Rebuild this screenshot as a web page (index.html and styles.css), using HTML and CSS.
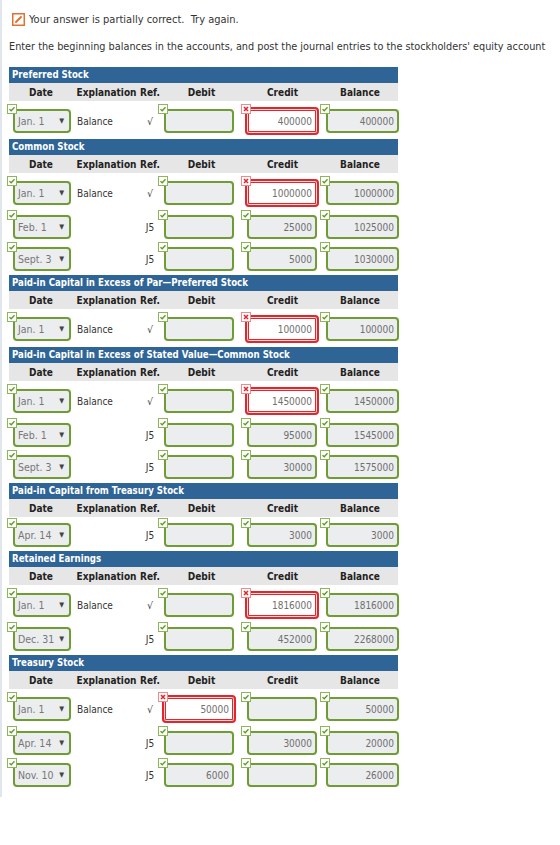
FILE: index.html
```html
<!DOCTYPE html>
<html lang="en">
<head>
    <meta charset="UTF-8">
    <meta name="viewport" content="width=device-width, initial-scale=1.0">
    <title>Stockholders' Equity Accounts</title>
    <link rel="stylesheet" href="styles.css">
</head>
<body>
    <div class="page">
        <p class="status">
            <svg class="status-icon" width="13" height="13" viewBox="0 0 13 13">
                <rect x="0.75" y="0.75" width="11.5" height="11.5" fill="#fff" stroke="#e4702f" stroke-width="1.5"/>
                <path d="M4 9 L9 4" stroke="#e4702f" stroke-width="2" stroke-linecap="round"/>
            </svg>
            Your answer is partially correct.&nbsp; Try again.
        </p>
        <p class="prompt">Enter the beginning balances in the accounts, and post the journal entries to the stockholders' equity account</p>

        <div class="ledger">
            <!-- Preferred Stock -->
            <section class="account">
                <h2 class="account-title">Preferred Stock</h2>
                <div class="row head"><span>Date</span><span>Explanation</span><span>Ref.</span><span>Debit</span><span>Credit</span><span>Balance</span></div>
                <div class="row">
                    <div class="cell"><span class="field date ok">Jan. 1<i class="arrow">&#9660;</i></span></div>
                    <div class="cell expl">Balance</div>
                    <div class="cell ref">&#8730;</div>
                    <div class="cell"><span class="field debit ok"></span></div>
                    <div class="cell"><span class="field credit bad">400000</span></div>
                    <div class="cell"><span class="field balance ok">400000</span></div>
                </div>
            </section>

            <!-- Common Stock -->
            <section class="account">
                <h2 class="account-title">Common Stock</h2>
                <div class="row head"><span>Date</span><span>Explanation</span><span>Ref.</span><span>Debit</span><span>Credit</span><span>Balance</span></div>
                <div class="row">
                    <div class="cell"><span class="field date ok">Jan. 1<i class="arrow">&#9660;</i></span></div>
                    <div class="cell expl">Balance</div>
                    <div class="cell ref">&#8730;</div>
                    <div class="cell"><span class="field debit ok"></span></div>
                    <div class="cell"><span class="field credit bad">1000000</span></div>
                    <div class="cell"><span class="field balance ok">1000000</span></div>
                </div>
                <div class="row">
                    <div class="cell"><span class="field date ok">Feb. 1<i class="arrow">&#9660;</i></span></div>
                    <div class="cell expl"></div>
                    <div class="cell ref">J5</div>
                    <div class="cell"><span class="field debit ok"></span></div>
                    <div class="cell"><span class="field credit ok">25000</span></div>
                    <div class="cell"><span class="field balance ok">1025000</span></div>
                </div>
                <div class="row">
                    <div class="cell"><span class="field date ok">Sept. 3<i class="arrow">&#9660;</i></span></div>
                    <div class="cell expl"></div>
                    <div class="cell ref">J5</div>
                    <div class="cell"><span class="field debit ok"></span></div>
                    <div class="cell"><span class="field credit ok">5000</span></div>
                    <div class="cell"><span class="field balance ok">1030000</span></div>
                </div>
            </section>

            <!-- Paid-in Capital in Excess of Par - Preferred -->
            <section class="account">
                <h2 class="account-title">Paid-in Capital in Excess of Par&mdash;Preferred Stock</h2>
                <div class="row head"><span>Date</span><span>Explanation</span><span>Ref.</span><span>Debit</span><span>Credit</span><span>Balance</span></div>
                <div class="row">
                    <div class="cell"><span class="field date ok">Jan. 1<i class="arrow">&#9660;</i></span></div>
                    <div class="cell expl">Balance</div>
                    <div class="cell ref">&#8730;</div>
                    <div class="cell"><span class="field debit ok"></span></div>
                    <div class="cell"><span class="field credit bad">100000</span></div>
                    <div class="cell"><span class="field balance ok">100000</span></div>
                </div>
            </section>

            <!-- Paid-in Capital in Excess of Stated Value - Common -->
            <section class="account">
                <h2 class="account-title">Paid-in Capital in Excess of Stated Value&mdash;Common Stock</h2>
                <div class="row head"><span>Date</span><span>Explanation</span><span>Ref.</span><span>Debit</span><span>Credit</span><span>Balance</span></div>
                <div class="row">
                    <div class="cell"><span class="field date ok">Jan. 1<i class="arrow">&#9660;</i></span></div>
                    <div class="cell expl">Balance</div>
                    <div class="cell ref">&#8730;</div>
                    <div class="cell"><span class="field debit ok"></span></div>
                    <div class="cell"><span class="field credit bad">1450000</span></div>
                    <div class="cell"><span class="field balance ok">1450000</span></div>
                </div>
                <div class="row">
                    <div class="cell"><span class="field date ok">Feb. 1<i class="arrow">&#9660;</i></span></div>
                    <div class="cell expl"></div>
                    <div class="cell ref">J5</div>
                    <div class="cell"><span class="field debit ok"></span></div>
                    <div class="cell"><span class="field credit ok">95000</span></div>
                    <div class="cell"><span class="field balance ok">1545000</span></div>
                </div>
                <div class="row">
                    <div class="cell"><span class="field date ok">Sept. 3<i class="arrow">&#9660;</i></span></div>
                    <div class="cell expl"></div>
                    <div class="cell ref">J5</div>
                    <div class="cell"><span class="field debit ok"></span></div>
                    <div class="cell"><span class="field credit ok">30000</span></div>
                    <div class="cell"><span class="field balance ok">1575000</span></div>
                </div>
            </section>

            <!-- Paid-in Capital from Treasury Stock -->
            <section class="account">
                <h2 class="account-title">Paid-in Capital from Treasury Stock</h2>
                <div class="row head"><span>Date</span><span>Explanation</span><span>Ref.</span><span>Debit</span><span>Credit</span><span>Balance</span></div>
                <div class="row">
                    <div class="cell"><span class="field date ok">Apr. 14<i class="arrow">&#9660;</i></span></div>
                    <div class="cell expl"></div>
                    <div class="cell ref">J5</div>
                    <div class="cell"><span class="field debit ok"></span></div>
                    <div class="cell"><span class="field credit ok">3000</span></div>
                    <div class="cell"><span class="field balance ok">3000</span></div>
                </div>
            </section>

            <!-- Retained Earnings -->
            <section class="account">
                <h2 class="account-title">Retained Earnings</h2>
                <div class="row head"><span>Date</span><span>Explanation</span><span>Ref.</span><span>Debit</span><span>Credit</span><span>Balance</span></div>
                <div class="row">
                    <div class="cell"><span class="field date ok">Jan. 1<i class="arrow">&#9660;</i></span></div>
                    <div class="cell expl">Balance</div>
                    <div class="cell ref">&#8730;</div>
                    <div class="cell"><span class="field debit ok"></span></div>
                    <div class="cell"><span class="field credit bad">1816000</span></div>
                    <div class="cell"><span class="field balance ok">1816000</span></div>
                </div>
                <div class="row">
                    <div class="cell"><span class="field date ok">Dec. 31<i class="arrow">&#9660;</i></span></div>
                    <div class="cell expl"></div>
                    <div class="cell ref">J5</div>
                    <div class="cell"><span class="field debit ok"></span></div>
                    <div class="cell"><span class="field credit ok">452000</span></div>
                    <div class="cell"><span class="field balance ok">2268000</span></div>
                </div>
            </section>

            <!-- Treasury Stock -->
            <section class="account">
                <h2 class="account-title">Treasury Stock</h2>
                <div class="row head"><span>Date</span><span>Explanation</span><span>Ref.</span><span>Debit</span><span>Credit</span><span>Balance</span></div>
                <div class="row">
                    <div class="cell"><span class="field date ok">Jan. 1<i class="arrow">&#9660;</i></span></div>
                    <div class="cell expl">Balance</div>
                    <div class="cell ref">&#8730;</div>
                    <div class="cell"><span class="field debit bad">50000</span></div>
                    <div class="cell"><span class="field credit ok"></span></div>
                    <div class="cell"><span class="field balance ok">50000</span></div>
                </div>
                <div class="row">
                    <div class="cell"><span class="field date ok">Apr. 14<i class="arrow">&#9660;</i></span></div>
                    <div class="cell expl"></div>
                    <div class="cell ref">J5</div>
                    <div class="cell"><span class="field debit ok"></span></div>
                    <div class="cell"><span class="field credit ok">30000</span></div>
                    <div class="cell"><span class="field balance ok">20000</span></div>
                </div>
                <div class="row">
                    <div class="cell"><span class="field date ok">Nov. 10<i class="arrow">&#9660;</i></span></div>
                    <div class="cell expl"></div>
                    <div class="cell ref">J5</div>
                    <div class="cell"><span class="field debit ok">6000</span></div>
                    <div class="cell"><span class="field credit ok"></span></div>
                    <div class="cell"><span class="field balance ok">26000</span></div>
                </div>
            </section>
        </div>
    </div>
</body>
</html>
```

FILE: styles.css
```css
body {
    margin: 0;
    padding: 0;
    font-family: "DejaVu Sans", Verdana, sans-serif;
    font-stretch: condensed;
    color: #333;
    background: #fff;
}

.page {
    border-left: 2px solid #e1e6ec;
    padding: 12px 0 6px 7px;
}

.status {
    margin: 0 0 0 3px;
    display: flex;
    align-items: center;
    gap: 4px;
    font-size: 11px;
    height: 14px;
}

.status-icon {
    display: block;
    flex: none;
}

.prompt {
    margin: 14px 0 14px 0;
    font-size: 10.8px;
    white-space: nowrap;
}

.ledger {
    width: 389px;
}

.account {
    margin-bottom: 2px;
}

.account-title {
    margin: 0;
    height: 16px;
    line-height: 16px;
    padding-left: 3px;
    background-color: #2f6497;
    color: #fff;
    font-size: 9.6px;
    font-weight: bold;
}

/* grid de columnas del libro mayor */
.row {
    display: grid;
    grid-template-columns: 64px 67px 20px 83px 79px 76px;
    align-items: center;
    padding: 6px 0 2px 0;
}

.row.head {
    height: 18px;
    padding: 0;
    background-color: #e6e6e6;
    font-size: 10px;
    font-weight: bold;
    color: #222;
}

.row.head span {
    text-align: center;
}

.cell {
    padding-left: 4px;
    font-size: 9.5px;
}

.cell.expl {
    font-size: 10px;
    color: #333;
}

.cell.ref {
    padding-left: 0;
    text-align: center;
    font-size: 10px;
    color: #333;
}

.field {
    position: relative;
    display: flex;
    align-items: center;
    justify-content: flex-end;
    box-sizing: border-box;
    height: 24px;
    padding: 0 3px;
    border: 2px solid #6f9c35;
    border-radius: 4px;
    background-color: #ebedef;
    color: #707070;
    font-size: 10px;
}

.field.debit,
.field.credit {
    width: 70px;
}

.field.balance {
    width: 73px;
}

.field.date {
    width: 58px;
    justify-content: space-between;
    padding: 0 5px 0 3px;
    color: #777;
    font-size: 10.5px;
}

.field .arrow {
    font-style: normal;
    font-size: 7px;
    color: #444;
}

.field.bad {
    height: 28px;
    margin: 0 -2px;
    border-color: #e3262b;
    background-color: #fff;
    box-shadow: inset 0 0 0 1px #fcd9d9, inset 0 0 0 2px #e3262b;
    padding-right: 5px;
}

.field.debit.bad,
.field.credit.bad {
    width: 74px;
}

/* marca de validación en la esquina del campo */
.field::before {
    content: "";
    position: absolute;
    left: -8px;
    top: -7px;
    width: 10px;
    height: 10px;
    box-sizing: border-box;
    border: 1px solid #8db55a;
    background: #fff url("data:image/svg+xml,%3Csvg xmlns='http://www.w3.org/2000/svg' width='8' height='8' viewBox='0 0 8 8'%3E%3Cpath d='M1.5 4.2 L3.2 5.8 L6.5 2.2' fill='none' stroke='%235e9a23' stroke-width='1.3'/%3E%3C/svg%3E") center / 8px 8px no-repeat;
}

.field.bad::before {
    left: -6px;
    top: -5px;
    border-color: #ef8b8b;
    background-image: url("data:image/svg+xml,%3Csvg xmlns='http://www.w3.org/2000/svg' width='8' height='8' viewBox='0 0 8 8'%3E%3Cpath d='M2 2 L6 6 M6 2 L2 6' fill='none' stroke='%23e3262b' stroke-width='1.6'/%3E%3C/svg%3E");
}
```
